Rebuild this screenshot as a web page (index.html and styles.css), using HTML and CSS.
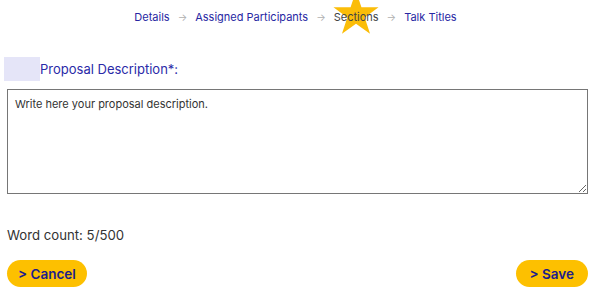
FILE: index.html
```html
<!DOCTYPE html>
<html lang="en">
<head>
  <meta charset="UTF-8">
  <meta name="viewport" content="width=device-width, initial-scale=1.0">
  <title>Proposal Description</title>
  <link rel="stylesheet" href="styles.css">
</head>
<body>

<nav class="steps">
  <a class="step" href="#">Details</a>
  <span class="arrow">&rarr;</span>
  <a class="step" href="#">Assigned Participants</a>
  <span class="arrow">&rarr;</span>
  <span class="step current">
    <svg class="star" viewBox="0 0 100 100" width="46" height="46">
      <polygon points="50,0 61.8,35.5 99,35.5 69,57.5 80.5,93 50,71 19.5,93 31,57.5 1,35.5 38.2,35.5" fill="#fbbd08"/>
    </svg>
    <span class="label">Sections</span>
  </span>
  <span class="arrow">&rarr;</span>
  <a class="step" href="#">Talk Titles</a>
</nav>

<form class="proposal">
  <div class="field-title">
    <span class="avatar"></span>
    <label for="description">Proposal Description*:</label>
  </div>
  <textarea id="description" placeholder="Write here your proposal description."></textarea>
  <p class="word-count">Word count: 5/500</p>
  <div class="actions">
    <button type="button" class="btn">&gt; Cancel</button>
    <button type="submit" class="btn">&gt; Save</button>
  </div>
</form>

</body>
</html>
```

FILE: styles.css
```css
* {
  box-sizing: border-box;
}

body {
  margin: 0;
  padding: 0 12px 0 7px;
  font-family: Inter, 'Noto Sans', Arial, sans-serif;
  background-color: #ffffff;
  color: #333333;
}

.steps {
  display: flex;
  justify-content: center;
  align-items: center;
  gap: 8px;
  height: 33px;
  padding-right: 4px;
  font-size: 11px;
}

.step {
  color: #2727a3;
  text-decoration: none;
}

.arrow {
  color: #b0b0b0;
  font-size: 10px;
}

.current {
  position: relative;
  color: #444444;
}

.current .label {
  position: relative;
}

.star {
  position: absolute;
  left: 50%;
  top: 50%;
  margin-left: -23px;
  margin-top: -26px;
}

.field-title {
  display: flex;
  align-items: center;
  margin-top: 24px;
  margin-left: -3px;
}

.avatar {
  width: 36px;
  height: 24px;
  background-color: #e5e5f8;
}

.field-title label {
  color: #2a2aa8;
  font-size: 13px;
}

textarea {
  display: block;
  width: 100%;
  height: 105px;
  margin-top: 8px;
  padding: 7px 7px;
  font-family: inherit;
  font-size: 11px;
  border: 1px solid #767676;
  resize: vertical;
}

textarea::placeholder {
  color: #333333;
}

.word-count {
  margin: 33px 0 0;
  font-size: 13.2px;
}

.actions {
  display: flex;
  justify-content: space-between;
  margin-top: 17px;
}

.btn {
  height: 27px;
  padding: 0 11px;
  border: none;
  border-radius: 14px;
  background-color: #fdc000;
  color: #1c1c8c;
  font-family: inherit;
  font-size: 13.5px;
  font-weight: 600;
  cursor: pointer;
}

.btn:last-child {
  padding: 0 14px;
}
```
